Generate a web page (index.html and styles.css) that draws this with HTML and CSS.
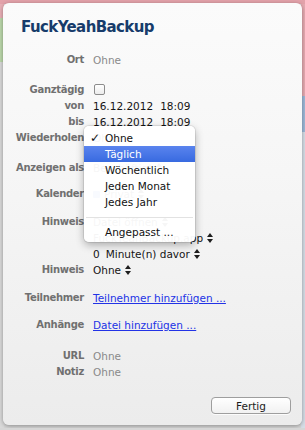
FILE: index.html
```html
<!DOCTYPE html>
<html lang="de">
<head>
  <meta charset="UTF-8">
  <title>FuckYeahBackup</title>
  <link rel="stylesheet" href="styles.css">
</head>
<body>

  <div class="popover">
    <h1 class="title">FuckYeahBackup</h1>

    <div class="section s-ort">
      <div class="row"><span class="label">Ort</span><span class="value muted">Ohne</span></div>
    </div>

    <div class="section s-time">
      <div class="row"><span class="label">Ganztägig</span><span class="value"><span class="checkbox"></span></span></div>
      <div class="row"><span class="label">von</span><span class="value date">16.12.2012<span class="time">18:09</span></span></div>
      <div class="row"><span class="label">bis</span><span class="value date">16.12.2012<span class="time">18:09</span></span></div>
      <div class="row"><span class="label">Wiederholen</span><span class="value">Ohne</span></div>
    </div>

    <div class="section s-show">
      <div class="row"><span class="label">Anzeigen als</span><span class="value popup">Beschäftigt <svg class="arrows" width="6" height="10" viewBox="0 0 6 10"><path d="M0 4L3 0L6 4Z M0 6L3 10L6 6Z"/></svg></span></div>
    </div>

    <div class="section s-cal">
      <div class="row"><span class="label">Kalender</span><span class="value popup"><span class="cal-dot"></span>Privat <svg class="arrows" width="6" height="10" viewBox="0 0 6 10"><path d="M0 4L3 0L6 4Z M0 6L3 10L6 6Z"/></svg></span></div>
    </div>

    <div class="section s-alarm">
      <div class="row"><span class="label">Hinweis</span><span class="value popup">Datei öffnen <svg class="arrows" width="6" height="10" viewBox="0 0 6 10"><path d="M0 4L3 0L6 4Z M0 6L3 10L6 6Z"/></svg></span></div>
      <div class="row"><span class="label"></span><span class="value popup">FuckYeahBackup.app <svg class="arrows" width="6" height="10" viewBox="0 0 6 10"><path d="M0 4L3 0L6 4Z M0 6L3 10L6 6Z"/></svg></span></div>
      <div class="row"><span class="label"></span><span class="value popup"><span class="num">0</span>Minute(n) davor <svg class="arrows" width="6" height="10" viewBox="0 0 6 10"><path d="M0 4L3 0L6 4Z M0 6L3 10L6 6Z"/></svg></span></div>
      <div class="row"><span class="label">Hinweis</span><span class="value popup">Ohne <svg class="arrows" width="6" height="10" viewBox="0 0 6 10"><path d="M0 4L3 0L6 4Z M0 6L3 10L6 6Z"/></svg></span></div>
    </div>

    <div class="section s-people">
      <div class="row"><span class="label">Teilnehmer</span><a class="value link" href="#">Teilnehmer hinzufügen ...</a></div>
    </div>

    <div class="section s-files">
      <div class="row"><span class="label">Anhänge</span><a class="value link" href="#">Datei hinzufügen ...</a></div>
    </div>

    <div class="section s-notes">
      <div class="row"><span class="label">URL</span><span class="value muted">Ohne</span></div>
      <div class="row"><span class="label">Notiz</span><span class="value muted">Ohne</span></div>
    </div>

    <div class="actions">
      <button class="btn">Fertig</button>
    </div>

    <ul class="menu">
      <li class="item"><span class="check">✓</span>Ohne</li>
      <li class="item active"><span class="check"></span>Täglich</li>
      <li class="item"><span class="check"></span>Wöchentlich</li>
      <li class="item"><span class="check"></span>Jeden Monat</li>
      <li class="item"><span class="check"></span>Jedes Jahr</li>
      <li class="sep"></li>
      <li class="item"><span class="check"></span>Angepasst ...</li>
    </ul>
  </div>

</body>
</html>
```

FILE: styles.css
```css
body {
  margin: 0;
  padding: 3px;
  font-family: "DejaVu Sans", Verdana, sans-serif;
  background:
    linear-gradient(#e3a2aa, #e3a2aa) 0 0 / 100% 4px no-repeat,
    linear-gradient(to bottom, #e8b0b6 0, #e8b0b6 18px, #bcd8ab 18px, #bcd8ab 62px, #d9d9d9 62px) 0 0 / 4px 100% no-repeat,
    linear-gradient(to bottom, #e6aab1 0, #e6aab1 96px, #9db8d8 96px, #9db8d8 132px, #d6dde6 132px) right 0 / 4px 100% no-repeat,
    #d6d6d6;
}
.popover {
  position: relative;
  width: 299px;
  height: 422px;
  box-sizing: border-box;
  border-radius: 6px;
  background: linear-gradient(to bottom, #fbfbfb 0, #f6f6f6 40%, #ececec 100%);
  box-shadow: 0 1px 4px rgba(0,0,0,0.35);
}
.title {
  margin: 0;
  padding: 15px 0 0 18px;
  font-size: 15px;
  line-height: 18px;
  letter-spacing: -0.6px;
  font-weight: bold;
  color: #173c6b;
}
.section {
  margin-top: 12px;
}
.s-ort { margin-top: 16px; }
.s-time { margin-top: 14px; }
.s-show { margin-top: 14px; }
.s-cal { margin-top: 10px; }
.s-alarm { margin-top: 12px; }
.s-people { margin-top: 12px; }
.s-files { margin-top: 11px; }
.s-notes { margin-top: 15px; }

.row {
  display: flex;
  align-items: center;
  height: 16px;
  line-height: 16px;
  font-size: 10.5px;
  white-space: nowrap;
}
.label {
  flex: none;
  width: 81px;
  margin-right: 9px;
  text-align: right;
  font-size: 10px;
  font-weight: bold;
  letter-spacing: -0.3px;
  color: #707070;
}
.value {
  color: #151515;
}
.muted {
  color: #8a8a8a;
}
.time {
  margin-left: 7px;
}
.checkbox {
  display: inline-block;
  width: 9px;
  height: 9px;
  margin: 3px 0 0 1px;
  border: 1px solid #8c8c8c;
  border-radius: 2px;
  background: linear-gradient(#ffffff, #ececec);
}
.popup {
  display: flex;
  align-items: center;
}
.arrows {
  margin-left: 4px;
  fill: #1e1e1e;
}
.cal-dot {
  display: inline-block;
  width: 7px;
  height: 7px;
  margin-right: 4px;
  border-radius: 1px;
  background: #4d80d6;
}
.num {
  margin-right: 6px;
}
.link {
  color: #2233e6;
  text-decoration: underline;
}
.actions {
  display: flex;
  justify-content: flex-end;
  margin-top: 17px;
  padding-right: 11px;
}
.btn {
  width: 80px;
  height: 17px;
  padding: 0;
  font-family: "DejaVu Sans", Verdana, sans-serif;
  font-size: 10.5px;
  color: #1c1c1c;
  border: 1px solid #9e9e9e;
  border-radius: 4px;
  background: linear-gradient(#ffffff, #f1f1f1);
  box-shadow: 0 1px 0 rgba(255,255,255,0.8);
}

.menu {
  position: absolute;
  left: 81px;
  top: 123px;
  width: 111px;
  margin: 0;
  padding: 4px 0 2px;
  list-style: none;
  border-radius: 5px;
  background: rgba(255,255,255,0.96);
  box-shadow: 0 3px 9px rgba(0,0,0,0.3), 0 0 0 1px rgba(0,0,0,0.08);
  font-size: 10.5px;
}
.item {
  display: flex;
  align-items: center;
  height: 16px;
  padding-left: 6px;
  color: #111;
}
.check {
  width: 15px;
  font-size: 12px;
  font-weight: bold;
}
.item.active {
  color: #fff;
  background: linear-gradient(#5a84ee, #386ae0);
}
.sep {
  height: 14px;
  margin: 0 2px;
  background: linear-gradient(#e2e2e2, #e2e2e2) 0 7px / 100% 1px no-repeat;
}
```
